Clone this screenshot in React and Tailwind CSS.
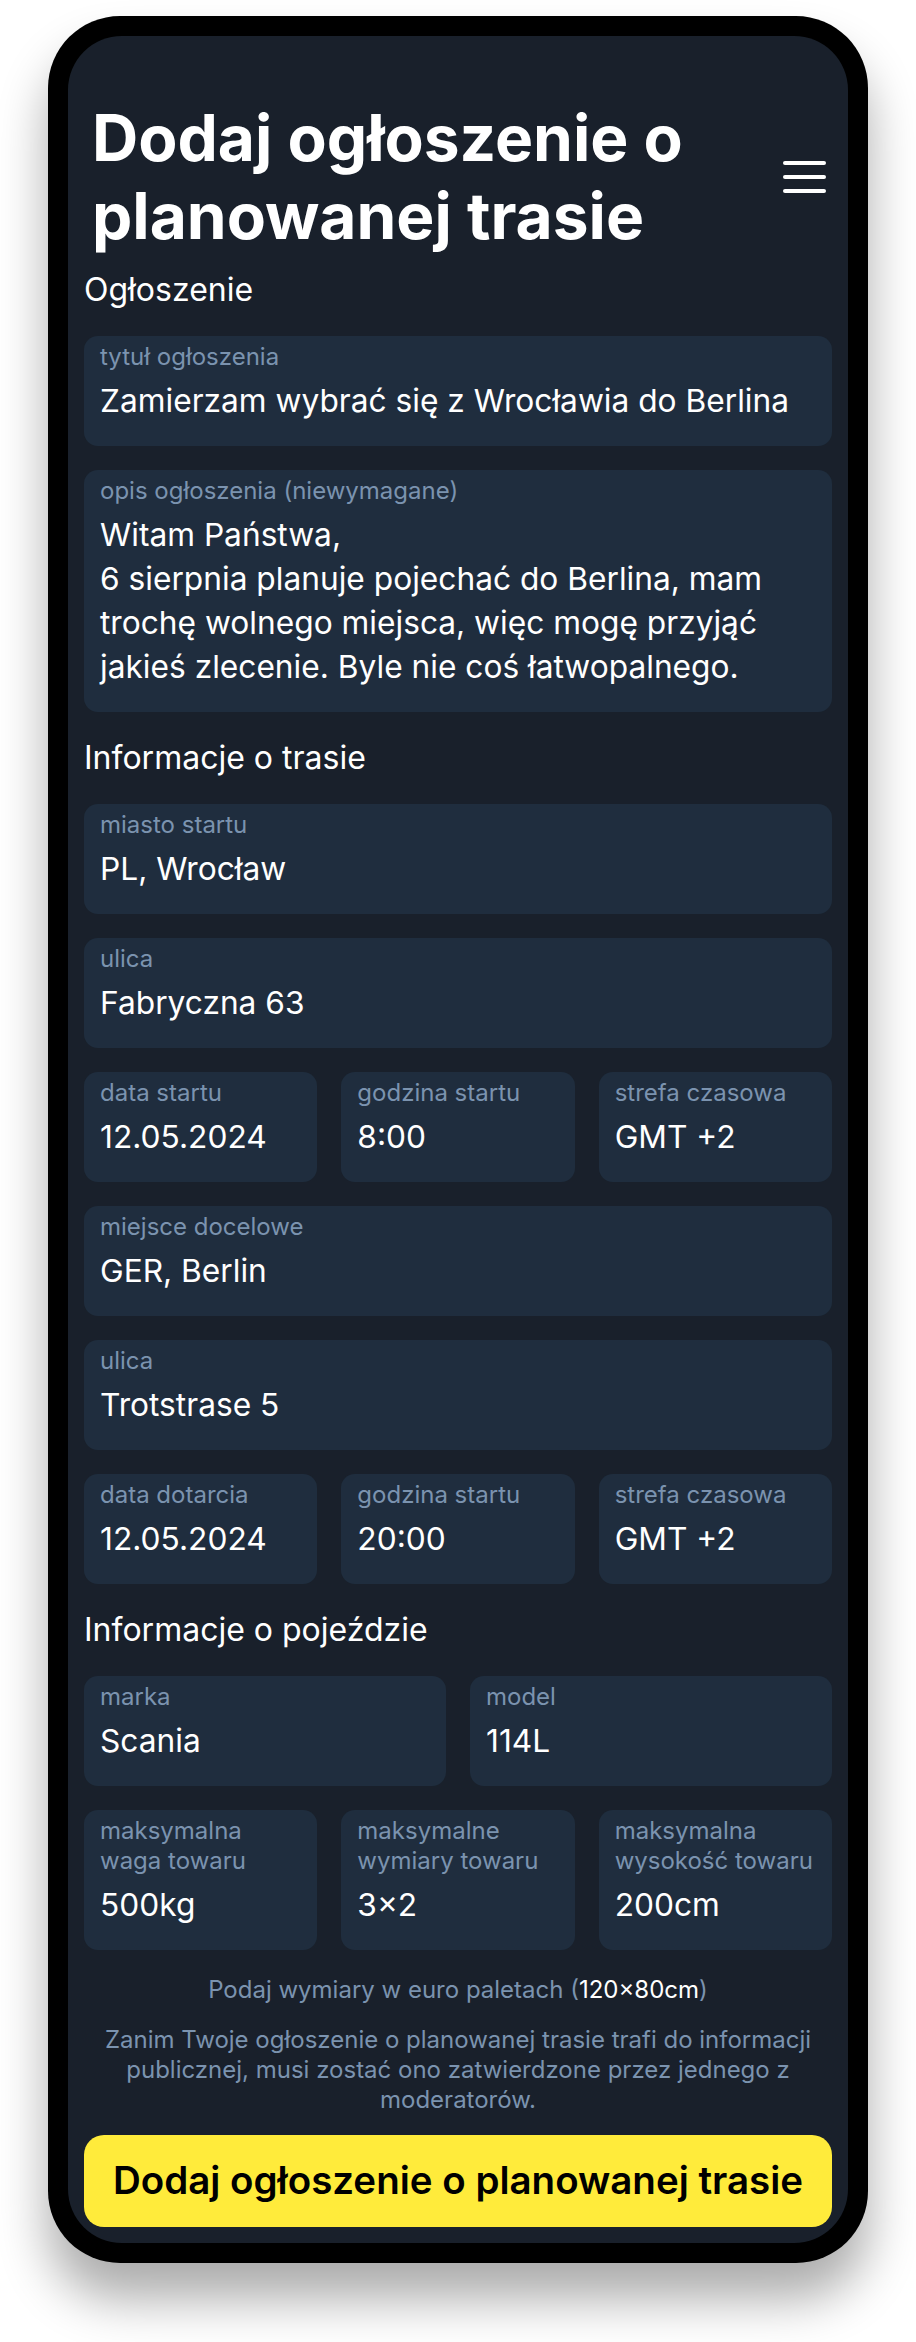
import React from "react";

function Field({ label, value, className = "" }) {
  return (
    <div className={"rounded-[14px] bg-[#1f2d3e] px-4 pt-[6px] pb-[23px] " + className}>
      <div className="text-[24px] leading-[30px] text-[#7b93af]">{label}</div>
      <div className="mt-[7px] text-[31.7px] leading-[44px] text-white">{value}</div>
    </div>
  );
}

function Heading({ children }) {
  return <h2 className="text-[32px] leading-[44px] text-white">{children}</h2>;
}

export default function App() {
  return (
    <div className="min-h-[2342px] bg-white px-[48px] pt-[16px] font-['Inter','Noto_Sans',sans-serif]">
      <div className="rounded-[72px] bg-black p-5 shadow-[0_36px_50px_rgba(0,0,0,0.33)]">
        <div className="rounded-[54px] bg-[#19202b] px-4 pt-[63px] pb-4">
          <header className="flex items-center justify-between pl-2 pr-[6px]">
            <h1 className="text-[64px] font-bold leading-[78px] text-white">
              Dodaj ogłoszenie o<br />planowanej trasie
            </h1>
            <button className="flex flex-col gap-[10px]" aria-label="menu">
              <span className="block h-1 w-[43px] rounded-full bg-white" />
              <span className="block h-1 w-[43px] rounded-full bg-white" />
              <span className="block h-1 w-[43px] rounded-full bg-white" />
            </button>
          </header>

          <div className="mt-[13px] flex flex-col gap-6">
            <Heading>Ogłoszenie</Heading>
            <Field label="tytuł ogłoszenia" value="Zamierzam wybrać się z Wrocławia do Berlina" />
            <Field
              label="opis ogłoszenia (niewymagane)"
              value={
                <>
                  Witam Państwa,
                  <br />6 sierpnia planuje pojechać do Berlina, mam
                  <br />trochę wolnego miejsca, więc mogę przyjąć
                  <br />jakieś zlecenie. Byle nie coś łatwopalnego.
                </>
              }
            />

            <Heading>Informacje o trasie</Heading>
            <Field label="miasto startu" value="PL, Wrocław" />
            <Field label="ulica" value="Fabryczna 63" />
            <div className="grid grid-cols-3 gap-6">
              <Field label="data startu" value="12.05.2024" />
              <Field label="godzina startu" value="8:00" />
              <Field label="strefa czasowa" value="GMT +2" />
            </div>
            <Field label="miejsce docelowe" value="GER, Berlin" />
            <Field label="ulica" value="Trotstrase 5" />
            <div className="grid grid-cols-3 gap-6">
              <Field label="data dotarcia" value="12.05.2024" />
              <Field label="godzina startu" value="20:00" />
              <Field label="strefa czasowa" value="GMT +2" />
            </div>

            <Heading>Informacje o pojeździe</Heading>
            <div className="grid grid-cols-2 gap-6">
              <Field label="marka" value="Scania" />
              <Field label="model" value="114L" />
            </div>
            <div className="grid grid-cols-3 gap-6">
              <Field label={<>maksymalna<br />waga towaru</>} value="500kg" />
              <Field label={<>maksymalne<br />wymiary towaru</>} value="3×2" />
              <Field label={<>maksymalna<br />wysokość towaru</>} value="200cm" />
            </div>
          </div>

          <p className="mt-[25px] text-center text-[24px] leading-[30px] text-[#7b93af]">
            Podaj wymiary w euro paletach (<span className="text-white">120×80cm</span>)
          </p>
          <p className="mt-[20px] text-center text-[24px] leading-[30px] text-[#7b93af]">
            Zanim Twoje ogłoszenie o planowanej trasie trafi do informacji
            <br />
            publicznej, musi zostać ono zatwierdzone przez jednego z
            <br />
            moderatorów.
          </p>

          <button className="mt-[20px] flex h-[92px] w-full items-center justify-center rounded-[20px] bg-[#ffeb3b] text-[38.5px] font-semibold text-black">
            Dodaj ogłoszenie o planowanej trasie
          </button>
        </div>
      </div>
    </div>
  );
}
